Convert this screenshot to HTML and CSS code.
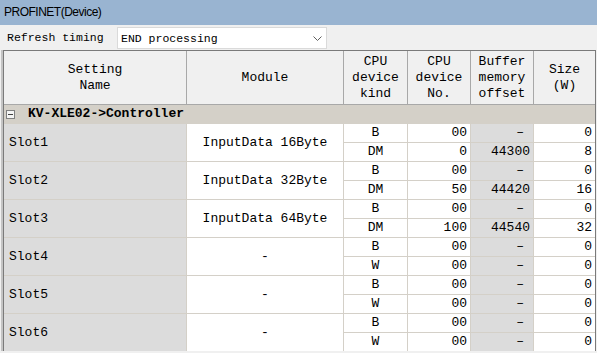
FILE: index.html
```html
<!DOCTYPE html>
<html>
<head>
<meta charset="utf-8">
<link rel="stylesheet" href="styles.css">
</head>
<body>
<div class="title">PROFINET(Device)</div>
<div class="toolbar">
  <span class="label">Refresh timing</span>
  <div class="select">
    <span>END processing</span>
    <svg class="chev" width="9" height="5" viewBox="0 0 9 5"><path d="M0.5 0.5 L4.5 4.5 L8.5 0.5" fill="none" stroke="#606060" stroke-width="1"/></svg>
  </div>
</div>
<div class="table">
  <div class="head">
    <div class="hc">Setting<br>Name</div>
    <div class="hc">Module</div>
    <div class="hc">CPU<br>device<br>kind</div>
    <div class="hc">CPU<br>device<br>No.</div>
    <div class="hc">Buffer<br>memory<br>offset</div>
    <div class="hc">Size<br>(W)</div>
  </div>
  <div class="body">
    <div class="group"><span class="toggle"></span><span class="gtext">KV-XLE02-&gt;Controller</span></div>

    <div class="name">Slot1</div><div class="mod">InputData 16Byte</div>
    <div class="kind">B</div><div class="num">00</div><div class="buf dash">–</div><div class="num">0</div>
    <div class="kind">DM</div><div class="num">0</div><div class="buf">44300</div><div class="num">8</div>

    <div class="name">Slot2</div><div class="mod">InputData 32Byte</div>
    <div class="kind">B</div><div class="num">00</div><div class="buf dash">–</div><div class="num">0</div>
    <div class="kind">DM</div><div class="num">50</div><div class="buf">44420</div><div class="num">16</div>

    <div class="name">Slot3</div><div class="mod">InputData 64Byte</div>
    <div class="kind">B</div><div class="num">00</div><div class="buf dash">–</div><div class="num">0</div>
    <div class="kind">DM</div><div class="num">100</div><div class="buf">44540</div><div class="num">32</div>

    <div class="name">Slot4</div><div class="mod">-</div>
    <div class="kind">B</div><div class="num">00</div><div class="buf dash">–</div><div class="num">0</div>
    <div class="kind">W</div><div class="num">00</div><div class="buf dash">–</div><div class="num">0</div>

    <div class="name">Slot5</div><div class="mod">-</div>
    <div class="kind">B</div><div class="num">00</div><div class="buf dash">–</div><div class="num">0</div>
    <div class="kind">W</div><div class="num">00</div><div class="buf dash">–</div><div class="num">0</div>

    <div class="name">Slot6</div><div class="mod">-</div>
    <div class="kind">B</div><div class="num">00</div><div class="buf dash">–</div><div class="num">0</div>
    <div class="kind">W</div><div class="num">00</div><div class="buf dash">–</div><div class="num">0</div>
  </div>
</div>
</body>
</html>
```
FILE: styles.css
```css
html, body {
  margin: 0;
  padding: 0;
  background: #f0f0f0;
  overflow: hidden;
}
body {
  width: 597px;
  height: 353px;
  font-family: "Liberation Mono", "Courier New", monospace;
  color: #000;
}
.title {
  height: 25px;
  background: #99b4d1;
  font-family: "Liberation Sans", Arial, sans-serif;
  font-size: 12px;
  letter-spacing: -0.5px;
  line-height: 25px;
  padding-left: 4px;
  box-sizing: border-box;
}
.toolbar {
  height: 25px;
  display: flex;
  align-items: flex-start;
  padding-top: 2px;
  box-sizing: border-box;
  font-size: 11.5px;
}
.label {
  margin-left: 7px;
  width: 110px;
  line-height: 22px;
}
.select {
  width: 210px;
  height: 22px;
  box-sizing: border-box;
  border: 1px solid #dadada;
  background: #fff;
  display: flex;
  align-items: center;
  justify-content: space-between;
  padding: 0 4px 0 3px;
}
.chev {
  display: block;
}
.table {
  margin: 0 1px 0 3px;
  border: 1px solid #7a7a7a;
  border-bottom: none;
  box-shadow: -2px 0 0 0 #c4c4c4;
  font-size: 13px;
}
.head {
  display: grid;
  grid-template-columns: 182px 156px 63px 62px 62px 61px;
  column-gap: 1px;
  background: #a8a8a8;
  border-bottom: 1px solid #a8a8a8;
}
.hc {
  background: #f0f0f0;
  height: 53px;
  display: flex;
  align-items: center;
  justify-content: center;
  text-align: center;
  line-height: 16px;
}
.body {
  display: grid;
  grid-template-columns: 182px 156px 63px 62px 62px 61px;
  grid-auto-rows: 18px;
  gap: 1px;
  background: #d4d0c8;
}
.body > div {
  display: flex;
  align-items: center;
  line-height: 18px;
  white-space: pre;
}
.group {
  grid-column: 1 / -1;
  background: #d4d0c8;
  font-weight: bold;
}
.toggle {
  width: 9px;
  height: 9px;
  box-sizing: border-box;
  border: 1px solid #808080;
  margin: 0 13px 0 2px;
  position: relative;
  background: #f4f4f4;
}
.toggle::after {
  content: "";
  position: absolute;
  left: 1px;
  right: 1px;
  top: 3px;
  height: 1px;
  background: #404040;
}
.name {
  grid-row: span 2;
  background: #dcdcdc;
  padding-left: 5px;
}
.mod {
  grid-row: span 2;
  background: #fff;
  justify-content: center;
}
.kind {
  background: #fff;
  justify-content: center;
}
.num {
  background: #fff;
  justify-content: flex-end;
  padding-right: 3px;
}
.buf {
  background: #dcdcdc;
  justify-content: flex-end;
  padding-right: 3px;
}
.buf.dash {
  padding-right: 9px;
}
```
